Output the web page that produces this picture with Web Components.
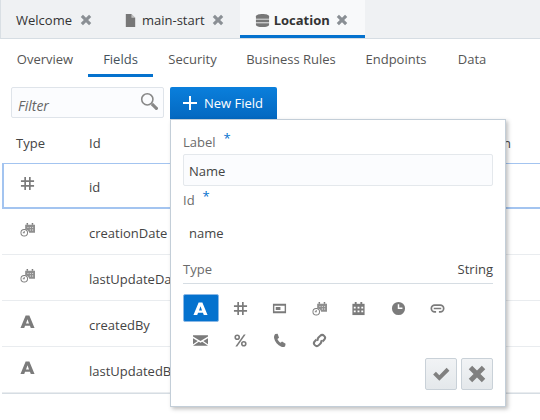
<!DOCTYPE html>
<html>
<head>
<meta charset="utf-8">
<style>
  html, body { margin: 0; height: 100%; }
  body {
    width: 540px;
    height: 420px;
    overflow: hidden;
    background: #fff;
    color: #333;
    font: 13px "Open Sans", sans-serif;
    display: flex;
    flex-direction: column;
    position: relative;
  }
</style>
</head>
<body>
<doc-tabs>
  <doc-tab>Welcome</doc-tab>
  <doc-tab icon="file">main-start</doc-tab>
  <doc-tab icon="db" active>Location</doc-tab>
</doc-tabs>
<sub-tabs>
  <sub-tab style="width:86px">Overview</sub-tab>
  <sub-tab style="width:65px" active>Fields</sub-tab>
  <sub-tab style="width:79px">Security</sub-tab>
  <sub-tab style="width:118px">Business Rules</sub-tab>
  <sub-tab style="width:92px">Endpoints</sub-tab>
  <sub-tab style="width:60px">Data</sub-tab>
</sub-tabs>
<field-toolbar></field-toolbar>
<field-table>
  <field-row icon="hash" selected>id</field-row>
  <field-row icon="datetime">creationDate</field-row>
  <field-row icon="datetime">lastUpdateDate</field-row>
  <field-row icon="text">createdBy</field-row>
  <field-row icon="text">lastUpdatedBy</field-row>
</field-table>
<new-field-popup></new-field-popup>

<script>
const html = String.raw;

const ICONS = {
  close: `<path d="M2.500 0 6 3.500 9.500 0 12 2.500 8.500 6 12 9.500 9.500 12 6 8.500 2.500 12 0 9.500 3.500 6 0 2.500z" transform="translate(2 2)"/>`,
  file: `<path d="M3 1h6l4 4v10H3z"/><path d="M9 1v4h4z" fill="#fff" opacity=".55"/>`,
  db: `<path d="M1 3.500C1 2 4 1 8 1s7 1 7 2.500V6H1z"/><rect x="1" y="7" width="14" height="3"/><path d="M1 11h14v1.500C15 14 12 15 8 15s-7-1-7-2.500z"/>`,
  hash: `<path d="M4.600 1h1.800v14H4.600zM9.600 1h1.800v14H9.600zM1 4.500h14v1.800H1zM1 9.700h14v1.800H1z"/>`,
  text: `<path d="M6 1.500h4L15.500 15h-4l-.9-2.500H5.400L4.500 15h-4zM8 5.500 6.400 10h3.200z" fill-rule="evenodd"/>`,
  card: `<path d="M1 3h14v10H1zM2.500 5v6h11V5zM4 6.500h5v3H4z" fill-rule="evenodd"/>`,
  datetime: `<path d="M5.500 3h10.500v8.500H9.800A5 5 0 0 0 5.500 7.600z" opacity=".85"/><path d="M7 1h1.600v2H7zM12.500 1h1.600v2h-1.600z"/><path d="M8 5.500h1v1H8zM10.500 5.500h1v1h-1zM13 5.500h1v1h-1zM10.500 8h1v1h-1zM13 8h1v1h-1z" fill="#fff"/><path d="M4.500 7.500a4 4 0 1 0 0 8 4 4 0 0 0 0-8zm0 1a3 3 0 1 1 0 6 3 3 0 0 1 0-6z" fill-rule="evenodd"/><path d="M4 9.500h1V12H3v-1h1z"/>`,
  calendar: `<path d="M1.500 3h13v12h-13z"/><path d="M4 1h2v3H4zM10 1h2v3h-2z"/><path d="M3 6h2v2H3zM7 6h2v2H7zM11 6h2v2h-2zM3 10h2v2H3zM7 10h2v2H7zM11 10h2v2h-2z" fill="#fff"/>`,
  clock: `<path fill-rule="evenodd" d="M8 1a7 7 0 1 1 0 14A7 7 0 0 1 8 1zM7.200 3.500v5h5V7H8.800V3.500z"/>`,
  link: `<path fill-rule="evenodd" d="M5 3.500h6a4.500 4.500 0 0 1 0 9H9.500v-1.800H11a2.700 2.700 0 0 0 0-5.400H5a2.700 2.700 0 0 0 0 5.400h1.500v1.800H5a4.500 4.500 0 0 1 0-9z"/><rect x="4" y="7.200" width="8" height="1.600"/>`,
  mail: `<path d="M0 2.500h16v1.300L8 8.500 0 3.800zM0 5.500l5 3-5 3.500zM16 5.500V12l-5-3.500zM6.200 9.300 8 10.300l1.800-1L16 13.500h-16z"/>`,
  percent: `<path fill-rule="evenodd" d="M4.500 1.500a3 3 0 1 1 0 6 3 3 0 0 1 0-6zm0 1.700a1.300 1.300 0 1 0 0 2.600 1.300 1.300 0 0 0 0-2.600zM11.500 8.500a3 3 0 1 1 0 6 3 3 0 0 1 0-6zm0 1.700a1.300 1.300 0 1 0 0 2.600 1.300 1.300 0 0 0 0-2.600z"/><path d="M11.500 1.500h2L4.500 14.500h-2z"/>`,
  phone: `<path d="M3.500 1 6 .8 7.500 5 5.800 6.300c.5 1.500 1.700 3 3.300 4l1.600-1.200 3.800 2.400-.5 2.500c-.8 1-2.500 1.300-4 .6C6 12.800 3 9.500 2.200 5.200 2 3.500 2.500 2 3.500 1z"/>`,
  chain: `<g fill="none" stroke="currentColor" stroke-width="2.200" transform="rotate(-45 8 8)"><path d="M6.500 5H4a3 3 0 0 0 0 6h2.500a3 3 0 0 0 2.800-2"/><path d="M9.500 11H12a3 3 0 0 0 0-6H9.500a3 3 0 0 0-2.800 2"/></g>`,
  search: `<g fill="none" stroke="currentColor"><circle cx="6.500" cy="6.500" r="5" stroke-width="1.400"/><path d="M10.500 10.500l5 5" stroke-width="2.800"/></g>`,
  plus: `<path d="M7 1h2v6h6v2H9v6H7V9H1V7h6z"/>`,
  check: `<path d="M1 8.500 3.500 6l3 3L13 2.500 15.500 5l-9 9z"/>`,
};

class TypeIcon extends HTMLElement {
  connectedCallback() {
    const size = this.getAttribute("size") || 16;
    this.attachShadow({ mode: "open" }).innerHTML = html`
      <style>
        :host { display: inline-flex; flex: none; color: inherit; }
        svg { display: block; fill: currentColor; }
      </style>
      <svg width="${size}" height="${size}" viewBox="0 0 16 16">${ICONS[this.getAttribute("name")]}</svg>
    `;
  }
}
customElements.define("type-icon", TypeIcon);

class DocTabs extends HTMLElement {
  constructor() {
    super();
    this.attachShadow({ mode: "open" }).innerHTML = html`
      <style>
        :host {
          display: flex;
          height: 39px;
          flex: none;
          box-sizing: border-box;
          background: #eff1f3;
          border-left: 1px solid #d9dfe4;
          border-bottom: 1px solid #d6dde3;
        }
      </style>
      <slot></slot>
    `;
  }
}
customElements.define("doc-tabs", DocTabs);

class DocTab extends HTMLElement {
  constructor() {
    super();
    const icon = this.getAttribute("icon");
    this.attachShadow({ mode: "open" }).innerHTML = html`
      <style>
        :host {
          display: flex;
          align-items: center;
          box-sizing: border-box;
          height: 38px;
          padding: 2px 15px 0 15px;
          gap: 7px;
          color: #333;
        }
        :host([active]) {
          background: #f8f9fa;
          font-weight: 700;
          border-bottom: 3px solid #0572ce;
          padding: 5px 16px 0 15px;
        }
        type-icon { color: #777; margin-right: -3px; }
        .x { color: #8a8f94; margin: 0; }
        :host([icon]) .x { margin-left: -1px; }
        :host([active]) .x { margin-left: -2px; }
      </style>
      ${icon ? `<type-icon name="${icon}" size="15"></type-icon>` : ""}
      <slot></slot>
      <type-icon class="x" name="close" size="14"></type-icon>
    `;
  }
}
customElements.define("doc-tab", DocTab);

class SubTabs extends HTMLElement {
  constructor() {
    super();
    this.attachShadow({ mode: "open" }).innerHTML = html`
      <style>
        :host {
          display: flex;
          flex: none;
          height: 38px;
          box-sizing: border-box;
          padding-left: 2px;
        }
      </style>
      <slot></slot>
    `;
  }
}
customElements.define("sub-tabs", SubTabs);

class SubTab extends HTMLElement {
  constructor() {
    super();
    this.attachShadow({ mode: "open" }).innerHTML = html`
      <style>
        :host {
          display: flex;
          align-items: center;
          justify-content: center;
          box-sizing: border-box;
          height: 38px;
          padding-top: 5px;
          color: #555;
          border-bottom: 3px solid transparent;
        }
        :host([active]) { border-bottom-color: #0572ce; color: #44515c; }
      </style>
      <slot></slot>
    `;
  }
}
customElements.define("sub-tab", SubTab);

class FieldToolbar extends HTMLElement {
  constructor() {
    super();
    this.attachShadow({ mode: "open" }).innerHTML = html`
      <style>
        :host {
          display: flex;
          flex: none;
          gap: 6px;
          padding: 10px 0 0 11px;
          height: 32px;
        }
        .filter {
          display: flex;
          align-items: center;
          justify-content: space-between;
          box-sizing: border-box;
          width: 153px;
          height: 31px;
          padding: 5px 5px 0 6px;
          background: #fbfcfe;
          border: 1px solid #dfe4ea;
          border-radius: 2px;
          color: #666;
          font-style: italic;
          font-size: 14px;
        }
        .filter type-icon { color: #888; margin-top: -8px; }
        button {
          display: flex;
          align-items: center;
          gap: 6px;
          box-sizing: border-box;
          width: 107px;
          height: 32px;
          padding: 0 0 0 12px;
          border: 0;
          border-radius: 2px 2px 0 0;
          background: linear-gradient(#0a7fdc, #0468c0);
          color: #fff;
          font: inherit;
        }
      </style>
      <div class="filter">Filter<type-icon name="search" size="18"></type-icon></div>
      <button><type-icon name="plus" size="16"></type-icon>New Field</button>
    `;
  }
}
customElements.define("field-toolbar", FieldToolbar);

class FieldTable extends HTMLElement {
  constructor() {
    super();
    this.attachShadow({ mode: "open" }).innerHTML = html`
      <style>
        :host { display: block; flex: none; padding: 12px 0 0 2px; }
        .head {
          display: grid;
          grid-template-columns: 73px 1fr auto;
          height: 32px;
          align-items: center;
          padding: 0 29px 8px 14px;
          box-sizing: border-box;
          color: #444;
        }
        .rows { border-bottom: 1px solid #d6dde3; }
      </style>
      <div class="head"><span>Type</span><span>Id</span><span>Description</span></div>
      <div class="rows"><slot></slot></div>
    `;
  }
}
customElements.define("field-table", FieldTable);

class FieldRow extends HTMLElement {
  constructor() {
    super();
    this.attachShadow({ mode: "open" }).innerHTML = html`
      <style>
        :host {
          display: flex;
          align-items: center;
          box-sizing: border-box;
          height: 46px;
          padding-top: 2px;
          border-bottom: 1px solid #e9ecef;
          color: #444;
        }
        :host([selected]) { border: 2px solid #a3c4f0; border-width: 1px 0 2px 2px; }
        type-icon { color: #7b7b7b; margin: -6px 0 0 18px; }
        span { margin-left: 54px; }
        :host([selected]) type-icon { margin-left: 16px; }
      </style>
      <type-icon name="${this.getAttribute("icon")}" size="15"></type-icon>
      <span><slot></slot></span>
    `;
  }
}
customElements.define("field-row", FieldRow);

class NewFieldPopup extends HTMLElement {
  constructor() {
    super();
    const types = ["text", "hash", "card", "datetime", "calendar", "clock", "link", "mail", "percent", "phone", "chain"];
    this.attachShadow({ mode: "open" }).innerHTML = html`
      <style>
        :host {
          position: absolute;
          left: 170px;
          top: 119px;
          width: 336px;
          height: 288px;
          box-sizing: border-box;
          padding: 13px 12px 0 12px;
          background: #fff;
          border: 1px solid #c3ced8;
          box-shadow: 2px 2px 4px rgba(0,0,0,.25);
          display: flex;
          flex-direction: column;
          color: #6b6b6b;
        }
        label { display: flex; gap: 8px; line-height: 18px; height: 21px; }
        i { color: #0572ce; font-style: normal; margin-top: -4px; }
        .input {
          box-sizing: border-box;
          height: 32px;
          line-height: 33px;
          padding: 0 5px;
          background: #fbfcfe;
          border: 1px solid #e4e8ec;
          border-radius: 2px;
          color: #444;
        }
        .id { margin-top: 5px; }
        .value { height: 28px; line-height: 28px; padding: 0 6px; color: #444; margin-top: 7px; }
        .type {
          display: flex;
          justify-content: space-between;
          align-items: center;
          height: 23px;
          margin-top: 10px;
          border-bottom: 1px solid #d6dde3;
          padding-bottom: 3px;
        }
        .type b { font-weight: 400; color: #444; }
        .icons {
          display: grid;
          grid-template-columns: repeat(7, 39.5px);
          grid-auto-rows: 32px;
          align-items: center;
          justify-items: center;
          margin: 8px 0 0 -2px;
          color: #7b7b7b;
        }
        .icons div { display: flex; align-items: center; justify-content: center; width: 36px; height: 28px; }
        .icons .on { background: #0572ce; color: #fff; border-radius: 2px; border: 1px solid #8ab8e6; box-sizing: border-box; }
        .actions { display: flex; justify-content: flex-end; gap: 4px; margin-top: 2px; }
        .actions div {
          display: flex;
          align-items: center;
          justify-content: center;
          width: 32px;
          height: 32px;
          box-sizing: border-box;
          border: 1px solid #c9d1d8;
          border-radius: 2px;
          background: linear-gradient(#f1f3f5, #e4e8eb);
          color: #808080;
        }
      </style>
      <label>Label <i>*</i></label>
      <div class="input">Name</div>
      <label class="id">Id <i>*</i></label>
      <div class="value">name</div>
      <div class="type"><span>Type</span><b>String</b></div>
      <div class="icons">
        ${types.map((name, i) => `<div class="${i ? "" : "on"}"><type-icon name="${name}" size="15"></type-icon></div>`).join("")}
      </div>
      <div class="actions">
        <div><type-icon name="check" size="18"></type-icon></div>
        <div><type-icon name="close" size="22"></type-icon></div>
      </div>
    `;
  }
}
customElements.define("new-field-popup", NewFieldPopup);
</script>
</body>
</html>
